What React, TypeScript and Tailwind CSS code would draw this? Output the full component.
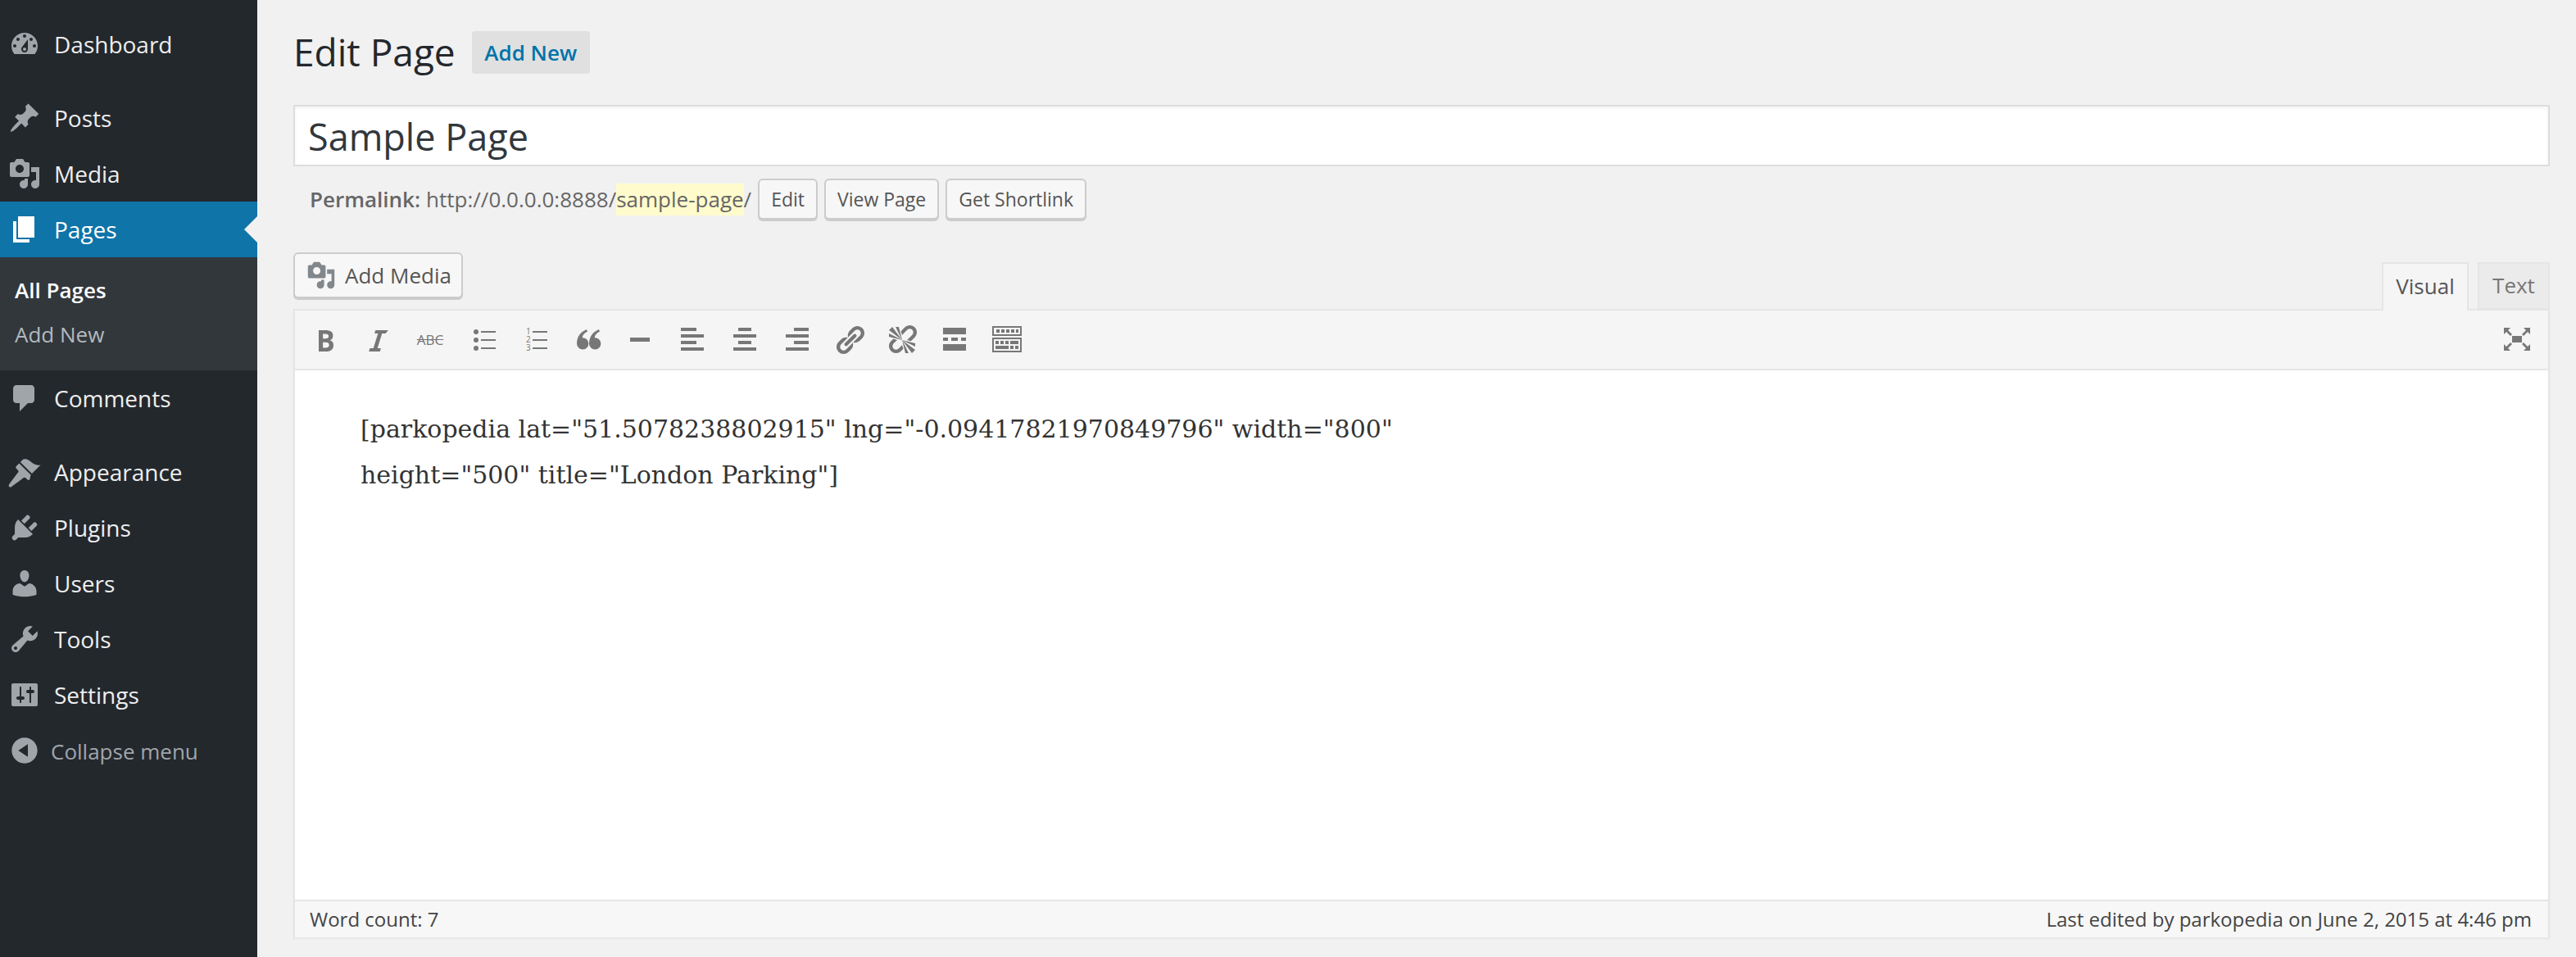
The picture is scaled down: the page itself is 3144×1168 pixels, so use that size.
import type { ReactNode } from "react";

const paths = {
  dashboard:
    "M3.76 16h12.48c1.1-1.37 1.76-3.11 1.76-5 0-4.42-3.58-8-8-8s-8 3.58-8 8c0 1.89.66 3.63 1.76 5zM10 4c.55 0 1 .45 1 1s-.45 1-1 1-1-.45-1-1 .45-1 1-1zM6 6c.55 0 1 .45 1 1s-.45 1-1 1-1-.45-1-1 .45-1 1-1zm8 0c.55 0 1 .45 1 1s-.45 1-1 1-1-.45-1-1 .45-1 1-1zm-5.37 5.55L12 7v6c0 1.1-.9 2-2 2s-2-.9-2-2c0-.57.24-1.08.63-1.45zM4 10c.55 0 1 .45 1 1s-.45 1-1 1-1-.45-1-1 .45-1 1-1zm12 0c.55 0 1 .45 1 1s-.45 1-1 1-1-.45-1-1 .45-1 1-1zm-5 3c0-.55-.45-1-1-1s-1 .45-1 1 .45 1 1 1 1-.45 1-1z",
  post: "M10.44 3.02l1.82-1.82 6.36 6.35-1.83 1.82c-1.05-.68-2.48-.57-3.41.36l-.75.75c-.92.93-1.04 2.35-.35 3.41l-1.83 1.82-2.41-2.41-2.8 2.79c-.42.42-3.38 2.71-3.8 2.29s1.86-3.39 2.28-3.81l2.79-2.79L4.1 9.36l1.83-1.82c1.05.69 2.48.57 3.4-.36l.75-.75c.93-.92 1.05-2.35.36-3.41z",
  media:
    "M13 11V4c0-.55-.45-1-1-1h-1.67L9 1H5L3.67 3H2c-.55 0-1 .45-1 1v7c0 .55.45 1 1 1h10c.55 0 1-.45 1-1zM7 4.5c1.38 0 2.5 1.12 2.5 2.5S8.38 9.5 7 9.5 4.5 8.38 4.5 7 5.62 4.5 7 4.5zM14 6h5v10.5c0 1.38-1.12 2.5-2.5 2.5S14 17.88 14 16.5s1.12-2.5 2.5-2.5c.17 0 .34.02.5.05V9h-3V6zm-4 8.05V13h2v3.5c0 1.38-1.12 2.5-2.5 2.5S7 17.88 7 16.5 8.12 14 9.5 14c.17 0 .34.02.5.05z",
  page: "M6 15V2h10v13H6zm-1 1h8v2H3V5h2v11z",
  comments:
    "M5 2h9c1.1 0 2 .9 2 2v7c0 1.1-.9 2-2 2h-2l-5 5v-5H5c-1.1 0-2-.9-2-2V4c0-1.1.9-2 2-2z",
  appearance:
    "M14.48 11.06L7.41 3.99l1.5-1.5c.5-.56 2.3-.47 3.51.32 1.21.8 1.43 1.28 2.91 2.1 1.18.64 2.45 1.26 4.45.85zm-.71.71L6.7 4.7 4.93 6.47c-.39.39-.39 1.02 0 1.41l1.06 1.06c.39.39.39 1.03 0 1.42-.6.6-5.4 7.23-5.4 7.23-.39.39-.39 1.03 0 1.42.39.39 1.03.39 1.42 0 0 0 6.63-4.8 7.23-5.4.39-.39 1.03-.39 1.42 0l1.06 1.06c.39.39 1.02.39 1.41 0z",
  plugins:
    "M13.11 4.36L9.87 7.6 8 5.73l3.24-3.24c.35-.34 1.05-.2 1.56.32.52.51.66 1.21.31 1.55zm-8 1.77l.91-1.12 9.01 9.01-1.19.84c-.71.71-2.63 1.16-3.82 1.16H6.14L4.9 17.26c-.59.59-1.54.59-2.12 0-.59-.58-.59-1.53 0-2.12l1.24-1.24v-3.88c0-1.13.4-3.19 1.09-3.89zm7.26 3.97l3.24-3.24c.34-.35 1.04-.21 1.55.31.52.51.66 1.21.31 1.55l-3.24 3.25z",
  users:
    "M10 9.25c-2.27 0-2.73-3.44-2.73-3.44C7 4.02 7.82 2 9.97 2c2.16 0 2.98 2.02 2.71 3.81 0 0-.41 3.44-2.68 3.44zm0 2.57L12.72 10c2.39 0 4.52 2.33 4.52 4.53v2.49s-3.65 1.13-7.24 1.13c-3.65 0-7.24-1.13-7.24-1.13v-2.49c0-2.25 1.94-4.48 4.47-4.48z",
  tools:
    "M16.68 9.77c-1.34 1.34-3.3 1.67-4.95.99l-5.41 6.52c-.99.99-2.59.99-3.58 0s-.99-2.59 0-3.57l6.52-5.42c-.68-1.65-.35-3.61.99-4.95 1.28-1.28 3.12-1.62 4.72-1.06l-2.89 2.89 2.82 2.82 2.86-2.87c.53 1.58.18 3.39-1.08 4.65zM3.81 16.21c.4.39 1.04.39 1.43 0 .4-.4.4-1.04 0-1.43-.39-.4-1.03-.4-1.43 0-.39.39-.39 1.03 0 1.43z",
  settings:
    "M18 16V4c0-.55-.45-1-1-1H3c-.55 0-1 .45-1 1v12c0 .55.45 1 1 1h14c.55 0 1-.45 1-1zM8 11h1c.55 0 1 .45 1 1s-.45 1-1 1H8v1.5c0 .28-.22.5-.5.5s-.5-.22-.5-.5V13H6c-.55 0-1-.45-1-1s.45-1 1-1h1V5.5c0-.28.22-.5.5-.5s.5.22.5.5V11zm5-2h-1c-.55 0-1-.45-1-1s.45-1 1-1h1V5.5c0-.28.22-.5.5-.5s.5.22.5.5V7h1c.55 0 1 .45 1 1s-.45 1-1 1h-1v5.5c0 .28-.22.5-.5.5s-.5-.22-.5-.5V9z",
  collapse:
    "M10 2.16c4.33 0 7.84 3.51 7.84 7.84s-3.51 7.84-7.84 7.84S2.16 14.33 2.16 10 5.71 2.16 10 2.16zm2 11.72V6.12L6.18 9.97z",
  bold: "M6 4v13h4.54c1.37 0 2.46-.33 3.26-1 .8-.66 1.2-1.58 1.2-2.77 0-.84-.17-1.51-.51-2.01s-.9-.85-1.67-1.03v-.09c.57-.1 1.02-.4 1.36-.9s.51-1.13.51-1.91c0-1.14-.39-1.98-1.17-2.5C12.75 4.26 11.5 4 9.78 4H6zm2.57 5.15V6.26h1.36c.73 0 1.27.11 1.61.32.34.22.51.58.51 1.07 0 .54-.16.92-.47 1.15s-.82.35-1.51.35h-1.5zm0 2.19h1.6c1.44 0 2.16.53 2.16 1.61 0 .6-.17 1.05-.51 1.34s-.86.43-1.57.43H8.57v-3.38z",
  italic: "M14.78 6h-2.13l-2.8 9h2.12l-.62 2H4.6l.62-2h2.14l2.8-9H8.03l.62-2h7.75z",
  link: "M17.74 2.76c1.68 1.69 1.68 4.41 0 6.1l-1.53 1.52c-1.12 1.12-2.7 1.47-4.14 1.09l2.62-2.61.76-.77.76-.76c.84-.84.84-2.2 0-3.04-.84-.85-2.2-.85-3.04 0l-.77.76-3.38 3.38c-.37-1.44-.02-3.02 1.1-4.14l1.52-1.53c1.69-1.68 4.42-1.68 6.1 0zM8.59 13.43l5.34-5.34c.42-.42.42-1.1 0-1.52-.44-.43-1.13-.39-1.53 0l-5.33 5.34c-.42.42-.42 1.1 0 1.52.44.43 1.13.39 1.52 0zm-.76 2.29l4.14-4.15c.38 1.44.03 3.02-1.09 4.14l-1.52 1.53c-1.69 1.68-4.41 1.68-6.1 0-1.68-1.68-1.68-4.42 0-6.1l1.53-1.52c1.12-1.12 2.7-1.47 4.14-1.1l-4.14 4.15c-.85.84-.85 2.2 0 3.05.84.84 2.2.84 3.04 0z",
  unlink:
    "M17.74 2.26c1.68 1.69 1.68 4.41 0 6.1l-1.53 1.52c-.32.33-.69.58-1.08.77L13 10l1.69-1.64.76-.77.76-.76c.84-.84.84-2.2 0-3.04-.84-.85-2.2-.85-3.04 0l-.77.76-.76.76L10 7l-.65-2.14c.19-.38.44-.75.77-1.07l1.52-1.53c1.69-1.68 4.42-1.68 6.1 0zM2 4l8 6-6-8zm4-2l4 8-2-8H6zM2 6l8 4-8-2V6zm7.36 7.69L10 13l.74 2.35-1.38 1.39c-1.69 1.68-4.41 1.68-6.1 0-1.68-1.68-1.68-4.42 0-6.1l1.39-1.38L7 10l-.69.64-1.52 1.53c-.85.84-.85 2.2 0 3.04.84.85 2.2.85 3.04 0zM18 16l-8-6 6 8zm-4 2l-4-8 2 8h2zm4-4l-8-4 8 2v2z",
};

function Dashicon({ d, className }: { d: string; className?: string }) {
  return (
    <svg viewBox="0 0 20 20" className={className} fill="currentColor">
      <path d={d} />
    </svg>
  );
}

const menuTop = [{ label: "Dashboard", icon: paths.dashboard }];
const menuMid = [
  { label: "Posts", icon: paths.post },
  { label: "Media", icon: paths.media },
];
const menuBottom = [
  { label: "Appearance", icon: paths.appearance },
  { label: "Plugins", icon: paths.plugins },
  { label: "Users", icon: paths.users },
  { label: "Tools", icon: paths.tools },
  { label: "Settings", icon: paths.settings },
];

function MenuRow({ label, icon }: { label: string; icon: string }) {
  return (
    <div className="flex h-[68px] items-center pl-[10px] text-[28px] text-[#eeeeee]">
      <Dashicon d={icon} className="h-10 w-10 shrink-0 text-[#a0a5aa]" />
      <span className="ml-4">{label}</span>
    </div>
  );
}

function Sidebar() {
  return (
    <aside className="w-[314px] shrink-0 bg-[#23282d] pt-5">
      {menuTop.map((m) => (
        <MenuRow key={m.label} {...m} />
      ))}
      <div className="h-[22px]" />
      {menuMid.map((m) => (
        <MenuRow key={m.label} {...m} />
      ))}
      <div className="relative flex h-[68px] items-center bg-[#0f74a8] pl-[10px] text-[28px] text-white">
        <Dashicon d={paths.page} className="h-10 w-10 shrink-0" />
        <span className="ml-4">Pages</span>
        <span className="absolute right-0 top-[18px] h-0 w-0 border-y-[16px] border-r-[16px] border-y-transparent border-r-[#f1f1f1]" />
      </div>
      <div className="h-[138px] bg-[#32373c] pt-[13px] text-[26px]">
        <div className="flex h-[54px] items-center pl-[18px] font-semibold text-white">All Pages</div>
        <div className="flex h-[54px] items-center pl-[18px] text-[#b4b9be]">Add New</div>
      </div>
      <MenuRow label="Comments" icon={paths.comments} />
      <div className="h-[22px]" />
      {menuBottom.map((m) => (
        <MenuRow key={m.label} {...m} />
      ))}
      <div className="flex h-[68px] items-center pl-[10px] text-[26px] text-[#a0a5aa]">
        <Dashicon d={paths.collapse} className="h-10 w-10 shrink-0" />
        <span className="ml-3 pt-[2px]">Collapse menu</span>
      </div>
    </aside>
  );
}

function SmallButton({ children }: { children: ReactNode }) {
  return (
    <button className="flex h-[50px] items-center rounded-[6px] border-2 border-[#cccccc] bg-[#f7f7f7] px-[14px] text-[23px] text-[#555555] shadow-[0_2px_0_#cccccc]">
      {children}
    </button>
  );
}

function ToolIcon({ children }: { children: ReactNode }) {
  return (
    <svg viewBox="0 0 40 40" className="h-10 w-10" fill="#777777">
      {children}
    </svg>
  );
}

function QuoteMark({ x }: { x: number }) {
  return (
    <path
      transform={`translate(${x} 0)`}
      d="M7 24.5C7 16 11 10.5 19 7l1 2.5c-3.500 1.800-6 4.200-6.300 7.700A7.200 7.200 0 1 1 7 24.500Z"
    />
  );
}

function Toolbar() {
  return (
    <div className="flex h-[73px] items-center justify-between border-b-2 border-[#e5e5e5] bg-[#f5f5f5] pl-[5px] pr-[18px]">
      <div className="flex">
        {tools.map((t, i) => (
          <div key={i} className="flex h-10 w-16 items-center justify-center">
            {t}
          </div>
        ))}
      </div>
      <ToolIcon>
        <rect x="14" y="15" width="12" height="8" />
        <path d="M4 5h8l-3 3 5 5-2 2-5-5-3 3zM36 5h-8l3 3-5 5 2 2 5-5 3 3zM4 33h8l-3-3 5-5-2-2-5 5-3-3zM36 33h-8l3-3-5-5 2-2 5 5 3-3z" />
      </ToolIcon>
    </div>
  );
}

const tools: ReactNode[] = [
  <Dashicon key="b" d={paths.bold} className="h-10 w-10 text-[#777777]" />,
  <Dashicon key="i" d={paths.italic} className="h-10 w-10 text-[#777777]" />,
  <span key="s" className="text-[17px] leading-none text-[#777777] line-through">
    ABC
  </span>,
  <ToolIcon key="ul">
    <circle cx="12" cy="10" r="3" />
    <circle cx="12" cy="20" r="3" />
    <circle cx="12" cy="30" r="3" />
    <rect x="18" y="9" width="18" height="2" />
    <rect x="18" y="19" width="18" height="2" />
    <rect x="18" y="29" width="18" height="2" />
  </ToolIcon>,
  <ToolIcon key="ol">
    <text x="9" y="13" fontSize="10">1</text>
    <text x="9" y="23" fontSize="10">2</text>
    <text x="9" y="33" fontSize="10">3</text>
    <rect x="17" y="9" width="18" height="2" />
    <rect x="17" y="19" width="18" height="2" />
    <rect x="17" y="29" width="18" height="2" />
  </ToolIcon>,
  <ToolIcon key="q">
    <QuoteMark x={0} />
    <QuoteMark x={15} />
  </ToolIcon>,
  <ToolIcon key="hr">
    <rect x="8" y="17" width="24" height="5" />
  </ToolIcon>,
  <ToolIcon key="al">
    <rect x="6" y="5" width="19" height="4" />
    <rect x="6" y="13" width="28" height="4" />
    <rect x="6" y="21" width="19" height="4" />
    <rect x="6" y="29" width="28" height="4" />
  </ToolIcon>,
  <ToolIcon key="ac">
    <rect x="12" y="5" width="16" height="4" />
    <rect x="6" y="13" width="28" height="4" />
    <rect x="12" y="21" width="16" height="4" />
    <rect x="6" y="29" width="28" height="4" />
  </ToolIcon>,
  <ToolIcon key="ar">
    <rect x="16" y="5" width="18" height="4" />
    <rect x="6" y="13" width="28" height="4" />
    <rect x="16" y="21" width="18" height="4" />
    <rect x="6" y="29" width="28" height="4" />
  </ToolIcon>,
  <Dashicon key="l" d={paths.link} className="h-10 w-10 text-[#777777]" />,
  <Dashicon key="u" d={paths.unlink} className="h-10 w-10 text-[#777777]" />,
  <ToolIcon key="more">
    <rect x="6" y="5" width="28" height="8" />
    <rect x="6" y="17" width="6" height="4" />
    <rect x="16" y="17" width="8" height="4" />
    <rect x="28" y="17" width="6" height="4" />
    <rect x="6" y="25" width="28" height="8" />
  </ToolIcon>,
  <ToolIcon key="kitchen">
    <path d="M2 3h36v12H2zM4 5v8h32V5zM2 17h36v18H2zM4 19v14h32V19z" fillRule="evenodd" />
    <rect x="7" y="7" width="4" height="4" />
    <rect x="13" y="7" width="4" height="4" />
    <rect x="19" y="7" width="4" height="4" />
    <rect x="25" y="7" width="4" height="4" />
    <rect x="31" y="7" width="3" height="4" />
    <rect x="6" y="21" width="4" height="4" />
    <rect x="12" y="21" width="4" height="4" />
    <rect x="18" y="21" width="4" height="4" />
    <rect x="24" y="21" width="10" height="4" />
    <rect x="6" y="27" width="16" height="4" />
    <rect x="24" y="27" width="4" height="4" />
    <rect x="30" y="27" width="4" height="4" />
  </ToolIcon>,
];

export default function App() {
  return (
    <div className="flex h-[1168px] w-[3144px] overflow-hidden bg-[#f1f1f1] font-['Open_Sans',sans-serif]">
      <Sidebar />
      <main className="flex min-w-0 flex-1 flex-col pb-[24px] pl-[44px] pr-[32px]">
        <div className="mt-[38px] flex h-[52px] items-center">
          <h1 className="pb-[2px] text-[46px] font-normal leading-none text-[#23282d]">Edit Page</h1>
          <a className="ml-[20px] flex h-[52px] w-[144px] items-center justify-center rounded-[4px] bg-[#e0e0e0] text-[26px] font-semibold text-[#0073aa]">
            Add New
          </a>
        </div>

        <div className="mt-[38px] flex h-[75px] items-center border-2 border-[#dddddd] bg-white pl-4 pt-[3px] text-[45px] font-normal text-[#32373c] shadow-[inset_0_2px_4px_rgba(0,0,0,0.05)]">
          Sample Page
        </div>

        <div className="mt-[15px] flex h-[50px] items-center pl-5 text-[26px] text-[#666666]">
          <span className="font-semibold">Permalink:</span>
          <span className="ml-[7px]">http://0.0.0.0:8888/</span>
          <span className="bg-[#fffbcc]">sample-page</span>
          <span>/</span>
          <div className="ml-2 flex gap-2">
            <SmallButton>Edit</SmallButton>
            <SmallButton>View Page</SmallButton>
            <SmallButton>Get Shortlink</SmallButton>
          </div>
        </div>

        <div className="relative z-10 mt-[40px] -mb-[2px] flex items-end justify-between">
          <button className="mb-[15px] flex h-[56px] w-[207px] items-center rounded-[6px] border-2 border-[#cccccc] bg-[#f7f7f7] pl-[14px] text-[26px] text-[#555555] shadow-[0_2px_0_#cccccc]">
            <Dashicon d={paths.media} className="h-9 w-9 shrink-0 text-[#82878c]" />
            <span className="ml-[11px]">Add Media</span>
          </button>
          <div className="flex gap-[11px]">
            <div className="flex h-[59px] w-[106px] items-center justify-center border-2 border-b-0 border-[#e5e5e5] bg-[#f5f5f5] pb-[3px] text-[26px] text-[#555555]">
              Visual
            </div>
            <div className="mb-[1px] flex h-[58px] w-[88px] items-center justify-center border-2 border-[#e5e5e5] bg-[#ebebeb] pb-[2px] text-[26px] text-[#777777]">
              Text
            </div>
          </div>
        </div>

        <div className="flex min-h-0 flex-1 flex-col border-2 border-[#e5e5e5] border-b-0 bg-white shadow-[0_2px_2px_rgba(0,0,0,0.05)]">
          <Toolbar />
          <div className="flex-1 px-[60px] pl-[80px] pt-[44px] font-['DejaVu_Serif',serif] text-[30px] leading-[56px] text-[#333333]">
            <p className="w-[1400px]">
              [parkopedia lat="51.5078238802915" lng="-0.09417821970849796" width="800"
              <br />
              height="500" title="London Parking"]
            </p>
          </div>
          <div className="flex h-[46px] items-center justify-between border-t-2 border-[#e5e5e5] bg-[#f7f7f7] pl-[18px] pr-[20px] text-[24px] text-[#444444]">
            <span>Word count: 7</span>
            <span>Last edited by parkopedia on June 2, 2015 at 4:46 pm</span>
          </div>
        </div>
      </main>
    </div>
  );
}
